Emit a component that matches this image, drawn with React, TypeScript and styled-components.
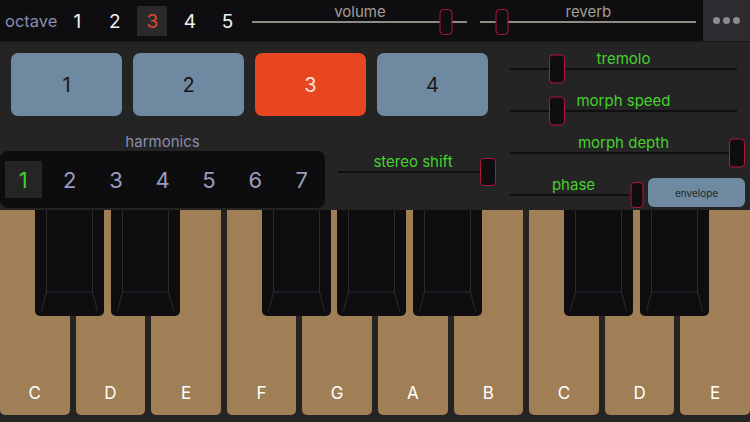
import React from "react";
import styled, { createGlobalStyle } from "styled-components";

const GlobalStyle = createGlobalStyle`
  html, body {
    margin: 0;
    padding: 0;
    background: #242424;
  }
  body {
    font-family: "Inter", "Roboto", "Liberation Sans", sans-serif;
  }
`;

const Screen = styled.div`
  width: 750px;
  height: 422px;
  display: flex;
  flex-direction: column;
  background: #242424;
  overflow: hidden;
`;

/* ---------- top bar ---------- */

const TopBar = styled.div`
  height: 42px;
  display: flex;
  align-items: flex-start;
  background: #0e0d10;
  border-bottom: 1px solid #1a1a1c;
  box-sizing: border-box;
`;

const OctaveLabel = styled.span`
  font-size: 16.5px;
  color: #8a8dab;
  margin: 11px 5px 0 5px;
  line-height: 20px;
`;

const OctaveList = styled.div`
  display: flex;
  gap: 7.5px;
  margin-top: 6px;
`;

const OctaveCell = styled.div<{ $active?: boolean }>`
  width: 30px;
  height: 30px;
  display: flex;
  align-items: center;
  justify-content: center;
  font-size: 19px;
  color: ${(p) => (p.$active ? "#e0482a" : "#f2f2f2")};
  background: ${(p) => (p.$active ? "#2a2a2b" : "transparent")};
`;

const MoreButton = styled.div`
  margin-left: auto;
  width: 47px;
  height: 41px;
  background: #2c2b30;
  display: flex;
  align-items: center;
  justify-content: center;
  gap: 3px;
`;

const Dot = styled.span`
  width: 7px;
  height: 7px;
  border-radius: 50%;
  background: #8c8b8e;
`;

/* ---------- slider ---------- */

const SliderWrap = styled.div<{ $w: number; $top: number; $left?: number }>`
  width: ${(p) => p.$w}px;
  margin-top: ${(p) => p.$top}px;
  margin-left: ${(p) => p.$left ?? 0}px;
  display: flex;
  flex-direction: column;
  align-items: center;
  flex: none;
`;

const SliderLabel = styled.div<{ $color: string; $size: number }>`
  font-size: ${(p) => p.$size}px;
  line-height: 18px;
  height: 18px;
  color: ${(p) => p.$color};
  white-space: nowrap;
`;

const Track = styled.div<{ $color: string }>`
  position: relative;
  width: 100%;
  height: 1.5px;
  background: ${(p) => p.$color};
`;

const Thumb = styled.div<{ $w: number; $h: number }>`
  position: absolute;
  top: 50%;
  width: ${(p) => p.$w}px;
  height: ${(p) => p.$h}px;
  transform: translate(-50%, -50%);
  box-sizing: border-box;
  border: 1.5px solid #b3173a;
  border-radius: 4px;
  background: #0e0d10;
`;

type SliderProps = {
  label: string;
  width: number;
  value: number;
  top: number;
  left?: number;
  thumbW?: number;
  thumbH?: number;
  labelColor?: string;
  lineColor?: string;
  size?: number;
};

function Slider({
  label,
  width,
  value,
  top,
  left,
  thumbW = 16,
  thumbH = 29,
  labelColor = "#44d22d",
  lineColor = "#0f0f11",
  size = 15,
}: SliderProps) {
  return (
    <SliderWrap $w={width} $top={top} $left={left}>
      <SliderLabel $color={labelColor} $size={size}>
        {label}
      </SliderLabel>
      <Track $color={lineColor}>
        <Thumb $w={thumbW} $h={thumbH} style={{ left: `${value * 100}%` }} />
      </Track>
    </SliderWrap>
  );
}

/* ---------- control area ---------- */

const Controls = styled.div`
  height: 168px;
  display: flex;
`;

const LeftSection = styled.div`
  width: 510px;
  display: flex;
  flex-direction: column;
`;

const PresetRow = styled.div`
  display: flex;
  gap: 11px;
  padding: 11px 0 0 11px;
`;

const PresetButton = styled.div<{ $active?: boolean }>`
  width: 111px;
  height: 63px;
  border-radius: 7px;
  background: ${(p) => (p.$active ? "#e8461e" : "#6f8aa0")};
  color: ${(p) => (p.$active ? "#f7e6df" : "#17181a")};
  font-size: 20px;
  display: flex;
  align-items: center;
  justify-content: center;
`;

const HarmonicsTitle = styled.div`
  width: 325px;
  text-align: center;
  margin-top: 17px;
  font-size: 15px;
  line-height: 18px;
  color: #8a8dab;
`;

const HarmonicsRow = styled.div`
  display: flex;
  align-items: flex-start;
`;

const HarmonicsPanel = styled.div`
  width: 325px;
  height: 57px;
  border-radius: 8px;
  background: #0d0c0f;
  display: grid;
  grid-template-columns: repeat(7, 1fr);
  align-items: center;
  justify-items: center;
`;

const HarmonicCell = styled.div<{ $active?: boolean }>`
  width: 37px;
  height: 37px;
  display: flex;
  align-items: center;
  justify-content: center;
  font-size: 22px;
  color: ${(p) => (p.$active ? "#3fd22a" : "#9a9dbe")};
  background: ${(p) => (p.$active ? "#252526" : "transparent")};
`;

const RightSection = styled.div`
  flex: 1;
  display: flex;
  flex-direction: column;
`;

const SliderRow = styled.div`
  height: 42px;
  display: flex;
  align-items: flex-start;
`;

const EnvelopeButton = styled.div`
  width: 97px;
  height: 29px;
  margin: 10px 0 0 11px;
  border-radius: 6px;
  background: #6f8aa0;
  color: #24272b;
  font-size: 10px;
  display: flex;
  align-items: center;
  justify-content: center;
`;

/* ---------- keyboard ---------- */

const Keyboard = styled.div`
  height: 212px;
  display: grid;
  grid-template-columns: repeat(10, 1fr);
  gap: 6px;
  padding-bottom: 7px;
  box-sizing: border-box;
`;

const WhiteKey = styled.div`
  position: relative;
  background: #a07f56;
  border-radius: 0 0 5px 5px;
  display: flex;
  align-items: flex-end;
  justify-content: center;
  padding-bottom: 12px;
  box-sizing: border-box;
  color: #ffffff;
  font-size: 17px;
`;

const BlackKey = styled.div`
  position: absolute;
  top: 0;
  right: -34.5px;
  width: 69px;
  height: 106px;
  background: #0e0d10;
  border-radius: 0 0 5px 5px;
  z-index: 2;
`;

const Bevel = styled.svg`
  display: block;
  width: 100%;
  height: 100%;
`;

function BlackKeyShape() {
  return (
    <BlackKey>
      <Bevel viewBox="0 0 69 106">
        <g stroke="#2c2b2f" strokeWidth="1" fill="none">
          <path d="M11.5 0 V82 H57.5 V0" />
          <path d="M11.5 82 L6.5 101" />
          <path d="M57.5 82 L62.5 101" />
        </g>
      </Bevel>
    </BlackKey>
  );
}

const whiteKeys = [
  { n: "C", black: true },
  { n: "D", black: true },
  { n: "E", black: false },
  { n: "F", black: true },
  { n: "G", black: true },
  { n: "A", black: true },
  { n: "B", black: false },
  { n: "C", black: true },
  { n: "D", black: true },
  { n: "E", black: false },
];

export default function App() {
  return (
    <>
      <GlobalStyle />
      <Screen>
        <TopBar>
          <OctaveLabel>octave</OctaveLabel>
          <OctaveList>
            {[1, 2, 3, 4, 5].map((n) => (
              <OctaveCell key={n} $active={n === 3}>
                {n}
              </OctaveCell>
            ))}
          </OctaveList>
          <Slider
            label="volume"
            width={215}
            value={0.9}
            top={3}
            left={10}
            thumbW={13}
            thumbH={26}
            labelColor="#a39e95"
            lineColor="#8f8a82"
          />
          <Slider
            label="reverb"
            width={216}
            value={0.1}
            top={3}
            left={13}
            thumbW={13}
            thumbH={26}
            labelColor="#a39e95"
            lineColor="#8f8a82"
          />
          <MoreButton>
            <Dot />
            <Dot />
            <Dot />
          </MoreButton>
        </TopBar>

        <Controls>
          <LeftSection>
            <PresetRow>
              {[1, 2, 3, 4].map((n) => (
                <PresetButton key={n} $active={n === 3}>
                  {n}
                </PresetButton>
              ))}
            </PresetRow>
            <HarmonicsTitle>harmonics</HarmonicsTitle>
            <HarmonicsRow>
              <HarmonicsPanel>
                {[1, 2, 3, 4, 5, 6, 7].map((n) => (
                  <HarmonicCell key={n} $active={n === 1}>
                    {n}
                  </HarmonicCell>
                ))}
              </HarmonicsPanel>
              <Slider label="stereo shift" width={150} value={1} top={2} left={13} thumbH={28} />
            </HarmonicsRow>
          </LeftSection>

          <RightSection>
            <SliderRow>
              <Slider label="tremolo" width={227} value={0.207} top={8} />
            </SliderRow>
            <SliderRow>
              <Slider label="morph speed" width={227} value={0.207} top={8} />
            </SliderRow>
            <SliderRow>
              <Slider label="morph depth" width={227} value={1} top={8} />
            </SliderRow>
            <SliderRow>
              <Slider label="phase" width={127} value={1} top={8} thumbW={13} thumbH={26} />
              <EnvelopeButton>envelope</EnvelopeButton>
            </SliderRow>
          </RightSection>
        </Controls>

        <Keyboard>
          {whiteKeys.map((k, i) => (
            <WhiteKey key={i}>
              {k.n}
              {k.black && <BlackKeyShape />}
            </WhiteKey>
          ))}
        </Keyboard>
      </Screen>
    </>
  );
}
